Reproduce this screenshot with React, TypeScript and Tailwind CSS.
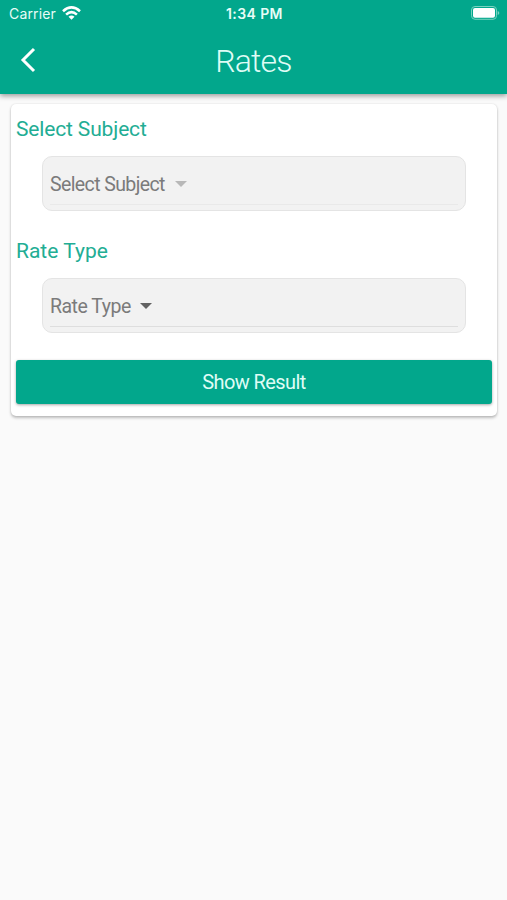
import React from "react";

function StatusBar() {
  return (
    <div className="grid h-[28px] grid-cols-3 items-center pr-[7px] pl-[9px] font-['Inter',sans-serif] text-[#e8fcf7]">
      <div className="flex items-center gap-[6px]">
        <span className="text-[14px] leading-none tracking-[0.15px]">Carrier</span>
        <svg className="mb-[2px] h-[14px] w-[19px]" viewBox="0 0 19 14" fill="none" stroke="white" strokeWidth="2.6">
          <path d="M1 5.2Q9.5-2.4 18 5.2" />
          <path d="M4.1 8.6Q9.5 3.6 14.9 8.6" />
          <path d="M6.5 10.8Q9.5 8.2 12.5 10.8L9.5 13.8Z" fill="white" stroke="none" />
        </svg>
      </div>
      <span className="text-center text-[14px] leading-none font-semibold tracking-[0.4px] whitespace-nowrap">1:34 PM</span>
      <svg className="mb-[2px] h-[14px] w-[29px] justify-self-end" viewBox="0 0 29 14">
        <rect x=".5" y=".5" width="25" height="12.8" rx="3.5" fill="none" stroke="#79d2bf" />
        <rect x="2" y="2" width="22" height="9.8" rx="2" fill="white" />
        <path d="M26.7 5v4q1.6-.6 1.6-2t-1.6-2Z" fill="#79d2bf" />
      </svg>
    </div>
  );
}

function SelectField({ label, labelClass, arrowClass, lineClass }: { label: string; labelClass: string; arrowClass: string; lineClass: string }) {
  return (
    <div className="mx-[31px] h-[55px] rounded-[10px] border border-[#e4e4e4] bg-[#f2f2f2] px-[7px] pt-[7px]">
      <div className={`flex h-[41px] items-center border-b ${lineClass}`}>
        <span className={`mt-[2px] text-[19.5px] leading-none whitespace-nowrap text-[#7b7b7b] ${labelClass}`}>{label}</span>
        <svg className={`h-[6px] w-[12px] ${arrowClass}`} viewBox="0 0 12 6" fill="currentColor">
          <path d="M0 0h12L6 6Z" />
        </svg>
      </div>
    </div>
  );
}

export default function App() {
  return (
    <div className="flex h-[900px] w-full flex-col bg-[#fafafa] font-['Roboto',sans-serif]">
      <header className="z-10 h-[94px] shrink-0 bg-[#02a78c] shadow-[0_2px_5px_rgba(0,0,0,0.38)]">
        <StatusBar />
        <div className="grid h-[64px] grid-cols-[60px_1fr_60px] items-center">
          <svg className="ml-[20px] h-[26px] w-[16px]" viewBox="0 0 16 26" fill="none" stroke="white" strokeWidth="3">
            <path d="M14 2 3 13l11 11" />
          </svg>
          <h1 className="pt-[2px] text-center text-[32px] leading-none font-light tracking-[-0.8px] text-[#dffcf5]">Rates</h1>
        </div>
      </header>
      <main className="mr-[10px] ml-[11px] mt-[10px] flex h-[312px] flex-col rounded-[5px] bg-white px-[5px] pb-[12px] shadow-[0_2px_3px_rgba(0,0,0,0.24),0_0_2px_rgba(0,0,0,0.12)]">
        <h2 className="h-[52px] pt-[15px] text-[21px] leading-none tracking-[-0.15px] text-[#22ad94]">Select Subject</h2>
        <div className="-mx-[5px]">
          <SelectField label="Select Subject" labelClass="w-[125px] tracking-[-0.6px]" arrowClass="text-[#b8b8b8]" lineClass="border-[#e9e9e9]" />
        </div>
        <h2 className="h-[67px] pt-[30px] text-[21px] leading-none text-[#22ad94]">Rate Type</h2>
        <div className="-mx-[5px]">
          <SelectField label="Rate Type" labelClass="w-[90px] tracking-[-0.5px]" arrowClass="text-[#626262]" lineClass="border-[#dedede]" />
        </div>
        <button className="mt-auto h-[44px] rounded-[3px] bg-[#02a78c] text-[20px] leading-none tracking-[-0.6px] text-[#dffcf5] shadow-[0_1px_3px_rgba(0,0,0,0.35)]">
          Show Result
        </button>
      </main>
    </div>
  );
}
